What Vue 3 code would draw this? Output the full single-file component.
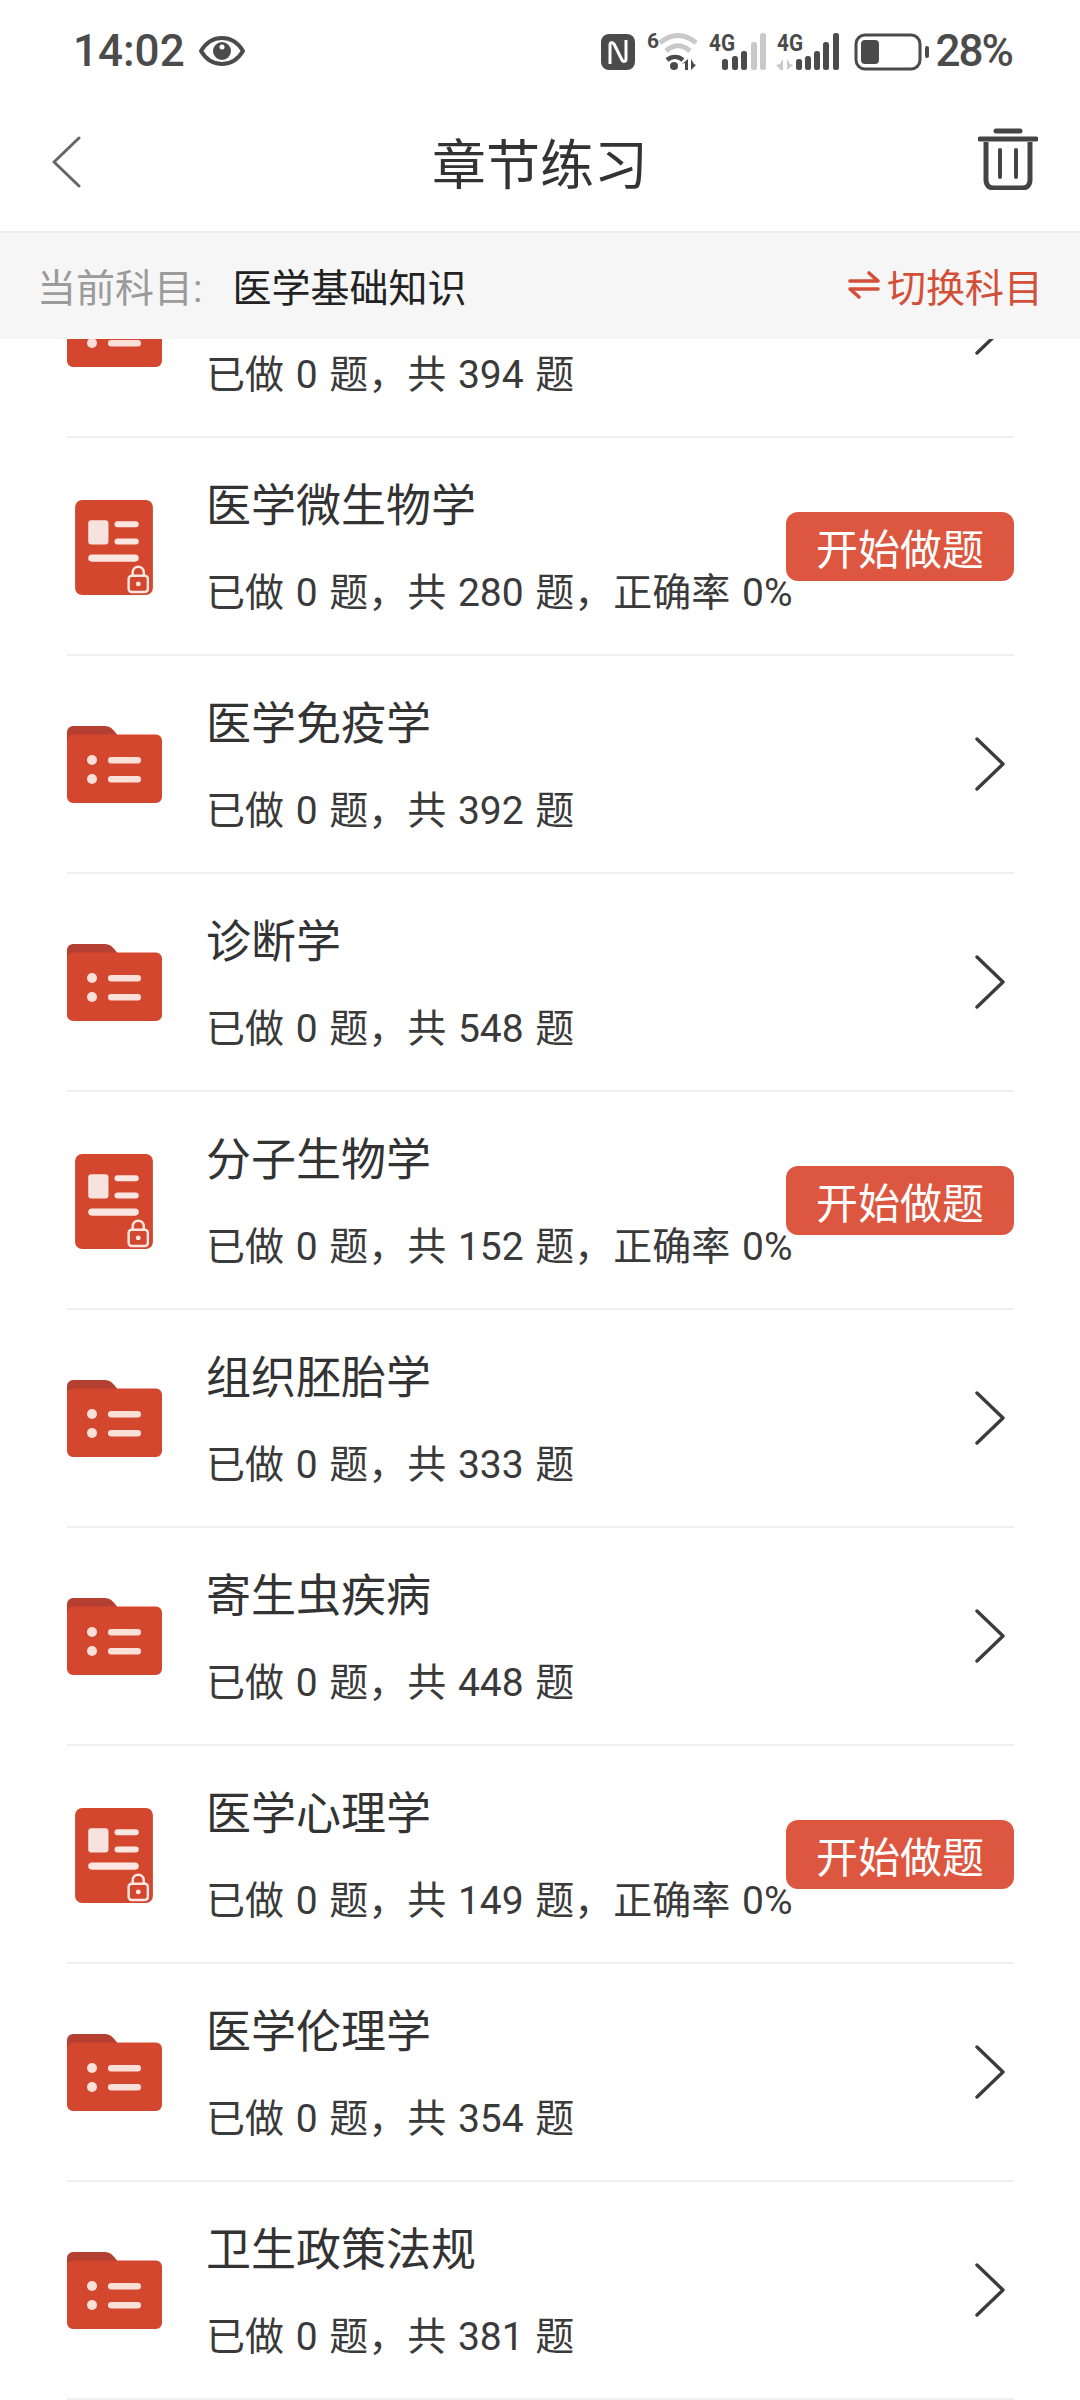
<template>
  <div class="page">
    <div class="status">
      <div class="status-left">
        <span class="time">14:02</span>
        <svg class="eye" viewBox="0 0 46 30" width="46" height="30">
          <path d="M2 15C8 5 15 2 23 2s15 3 21 13c-6 10-13 13-21 13S8 25 2 15z" fill="none" stroke="#4b4b4b" stroke-width="4" stroke-linejoin="round" />
          <circle cx="23" cy="15" r="9" fill="#4b4b4b" />
          <circle cx="23" cy="11" r="2.5" fill="#fff" />
        </svg>
      </div>
      <div class="status-right">
        <svg class="sys" viewBox="600 25 332 50" width="332" height="50">
          <rect x="602" y="33" width="34" height="36" rx="8" fill="#4b4b4b" />
          <path d="M611 63V44c0-3 2-3 4-1l8 16c1 2 4 2 4-1V39" fill="none" stroke="#fff" stroke-width="3" />
          <text x="648" y="47" class="tiny six">6</text>
          <path d="M661 42c11-10 25-10 36 0" fill="none" stroke="#c9c9c9" stroke-width="5" />
          <path d="M667 50c8-7 16-7 24 0" fill="none" stroke="#c9c9c9" stroke-width="5" />
          <path d="M668 59c5-4 11-4 16 0" fill="none" stroke="#4b4b4b" stroke-width="4.500" />
          <circle cx="675" cy="65" r="4" fill="#4b4b4b" />
          <path d="M689 58v11h-3v-7l-3 1zM692 58v11l5-5-2-1z" fill="#4b4b4b" />
          <text x="710" y="50" class="tiny" textLength="26" lengthAdjust="spacingAndGlyphs">4G</text>
          <g fill="#4b4b4b">
            <rect x="723" y="58" width="6" height="11" rx="2.500" />
            <rect x="733" y="55" width="6" height="14" rx="2.500" />
            <rect x="742" y="50" width="6" height="19" rx="2.500" />
          </g>
          <g fill="#c9c9c9">
            <rect x="752" y="41" width="6" height="28" rx="2.500" />
            <rect x="761" y="32" width="6" height="37" rx="2.500" />
          </g>
          <text x="778" y="50" class="tiny" textLength="26" lengthAdjust="spacingAndGlyphs">4G</text>
          <path d="M784 58v11h-2l-5-5 4-1zM788 58v11l6-5-3-1z" fill="#c9c9c9" />
          <g fill="#4b4b4b">
            <rect x="797" y="58" width="6" height="11" rx="2.500" />
            <rect x="806" y="55" width="6" height="14" rx="2.500" />
            <rect x="815" y="50" width="6" height="19" rx="2.500" />
            <rect x="824" y="41" width="6" height="28" rx="2.500" />
            <rect x="834" y="32" width="6" height="37" rx="2.500" />
          </g>
          <rect x="857" y="34" width="64" height="34" rx="9" fill="none" stroke="#4b4b4b" stroke-width="3" />
          <rect x="862" y="39" width="18" height="24" rx="4" fill="#4b4b4b" />
          <rect x="926" y="45" width="4" height="12" rx="2" fill="#4b4b4b" />
        </svg>
        <span class="pct">28%</span>
      </div>
    </div>

    <div class="nav">
      <svg class="back" viewBox="0 0 32 52" width="32" height="52">
        <path d="M29 2L4 26l25 24" fill="none" stroke="#666" stroke-width="3" stroke-linecap="round" stroke-linejoin="round" />
      </svg>
      <div class="nav-title">章节练习</div>
      <svg class="trash" viewBox="0 0 60 62" width="60" height="62">
        <path d="M18 3h24" stroke="#444" stroke-width="5" stroke-linecap="round" />
        <path d="M2 11h56" stroke="#444" stroke-width="5" stroke-linecap="round" />
        <path d="M8 14v38c0 5 3 8 8 8h28c5 0 8-3 8-8V14" fill="none" stroke="#444" stroke-width="5" />
        <path d="M22 22v27M38 22v27" stroke="#444" stroke-width="4" stroke-linecap="round" />
      </svg>
    </div>

    <div class="subject">
      <div class="subject-left">
        <span class="subject-label">当前科目:</span>
        <span class="subject-name">医学基础知识</span>
      </div>
      <div class="subject-switch">
        <svg viewBox="0 0 34 30" width="34" height="30">
          <path d="M3 11h28L22 3M31 19H3l9 8" fill="none" stroke="#d2503a" stroke-width="3.600" stroke-linecap="round" stroke-linejoin="round" />
        </svg>
        <span>切换科目</span>
      </div>
    </div>

    <div class="list">
      <div class="list-inner">
        <div v-for="item in rows" :key="item.total" class="row">
          <div class="row-icon">
            <svg v-if="item.locked" class="doc" viewBox="0 0 77 94" width="78" height="95">
              <rect width="77" height="94" rx="7" fill="#d4472f" />
              <rect x="13" y="20" width="20" height="24" rx="3" fill="#f7e3de" />
              <rect x="39" y="21" width="24" height="6" rx="3" fill="#fbe6e1" />
              <rect x="39" y="38" width="24" height="6" rx="3" fill="#fbe6e1" />
              <rect x="13" y="54" width="50" height="7" rx="3.500" fill="#fbe6e1" />
              <path d="M57 76v-4c0-8 11-8 11 0v4" fill="none" stroke="#fbe6e1" stroke-width="2.400" />
              <rect x="53" y="75" width="19" height="16" rx="3" fill="#d4472f" stroke="#fbe6e1" stroke-width="2.400" />
              <circle cx="62.500" cy="83" r="2.400" fill="#fbe6e1" />
            </svg>
            <svg v-else viewBox="0 0 95 77" width="95" height="77">
              <path d="M0 6a6 6 0 0 1 6-6h31c5 0 8 2 11 6l5 6v20H0z" fill="#b53f30" />
              <path d="M0 15a6 6 0 0 1 6-6.500h83a6 6 0 0 1 6 6V71a6 6 0 0 1-6 6H6a6 6 0 0 1-6-6z" fill="#d4472f" />
              <circle cx="25" cy="34" r="5" fill="#fbe0da" />
              <circle cx="25" cy="53" r="5" fill="#fbe0da" />
              <rect x="41" y="31" width="33" height="6.500" rx="3.200" fill="#fbe0da" />
              <rect x="41" y="50" width="33" height="6.500" rx="3.200" fill="#fbe0da" />
            </svg>
          </div>
          <div class="row-text">
            <div class="row-title">{{ item.title }}</div>
            <div class="row-sub">{{ subLine(item) }}</div>
          </div>
          <button v-if="item.locked" class="start">开始做题</button>
          <svg v-else class="chevron" viewBox="0 0 34 54" width="34" height="54">
            <path d="M4 2l26 25L4 52" fill="none" stroke="#3c3c3c" stroke-width="3.400" stroke-linecap="round" stroke-linejoin="round" />
          </svg>
        </div>
      </div>
    </div>
  </div>
</template>

<script setup>
// first row's title sits behind the subject bar in the reference
const rows = [
  { title: '', total: 394 },
  { title: '医学微生物学', total: 280, locked: true },
  { title: '医学免疫学', total: 392 },
  { title: '诊断学', total: 548 },
  { title: '分子生物学', total: 152, locked: true },
  { title: '组织胚胎学', total: 333 },
  { title: '寄生虫疾病', total: 448 },
  { title: '医学心理学', total: 149, locked: true },
  { title: '医学伦理学', total: 354 },
  { title: '卫生政策法规', total: 381 },
];

const subLine = (item) => {
  const base = `已做 0 题，共 ${item.total} 题`;
  return item.locked ? `${base}，正确率 0%` : base;
};
</script>

<style>
html, body { margin: 0; background: #fff; }
</style>

<style scoped>
.page {
  width: 1080px;
  height: 2400px;
  overflow: hidden;
  display: flex;
  flex-direction: column;
  background: #fff;
  font-family: Roboto, "Noto Sans CJK SC", sans-serif;
}
.status {
  height: 82px;
  padding: 10px 68px 0 73px;
  display: flex;
  align-items: center;
  justify-content: space-between;
  color: #4b4b4b;
  font-size: 44px;
  font-weight: 500;
}
.status-left, .status-right { display: flex; align-items: center; }
.eye { margin-left: 14px; }
.tiny { font-family: Roboto, sans-serif; font-size: 24px; font-weight: 700; fill: #4b4b4b; }
.six { font-size: 21px; }
.pct { margin-left: 5px; letter-spacing: -2px; }
.nav {
  height: 139px;
  padding: 0 42px;
  display: grid;
  grid-template-columns: 1fr auto 1fr;
  align-items: center;
  border-bottom: 2px solid #ececec;
}
.back { justify-self: start; margin-left: 8px; }
.trash { justify-self: end; margin-bottom: 6px; }
.nav-title { font-size: 54px; color: #333; }
.subject {
  height: 106px;
  padding: 0 37px 2px;
  box-sizing: border-box;
  display: flex;
  align-items: center;
  justify-content: space-between;
  background: #f6f6f6;
  font-size: 39px;
  position: relative;
  z-index: 1;
}
.subject-label { color: #9b9b9b; margin-right: 30px; }
.subject-name { color: #222; }
.subject-switch { display: flex; align-items: center; gap: 6px; color: #d2503a; }
.list { flex: 1; overflow: hidden; padding: 0 66px 0 67px; }
.list-inner { margin-top: -119px; }
.row {
  height: 216px;
  border-bottom: 2px solid #f0f0f0;
  display: flex;
  align-items: flex-start;
}
.row-icon {
  width: 95px;
  height: 216px;
  margin-right: 44px;
  flex: none;
  display: flex;
  align-items: center;
  justify-content: center;
}
.doc { margin: 2px 2px 0 0; }
.row-text { flex: 1; min-width: 0; white-space: nowrap; color: #333; }
.row-title { height: 64px; margin-top: 37px; font-size: 45px; line-height: 64px; color: #333; }
.row-sub { margin-top: 27px; font-size: 39px; line-height: 54px; word-spacing: 2px; color: #3a3a3a; }
.start {
  flex: none;
  width: 228px;
  height: 69px;
  margin-top: 74px;
  padding: 0;
  border: none;
  border-radius: 12px;
  background: #dd563f;
  color: #fff;
  font-family: inherit;
  font-size: 42px;
}
.chevron { flex: none; margin: 81px 7px 0 0; }
</style>
